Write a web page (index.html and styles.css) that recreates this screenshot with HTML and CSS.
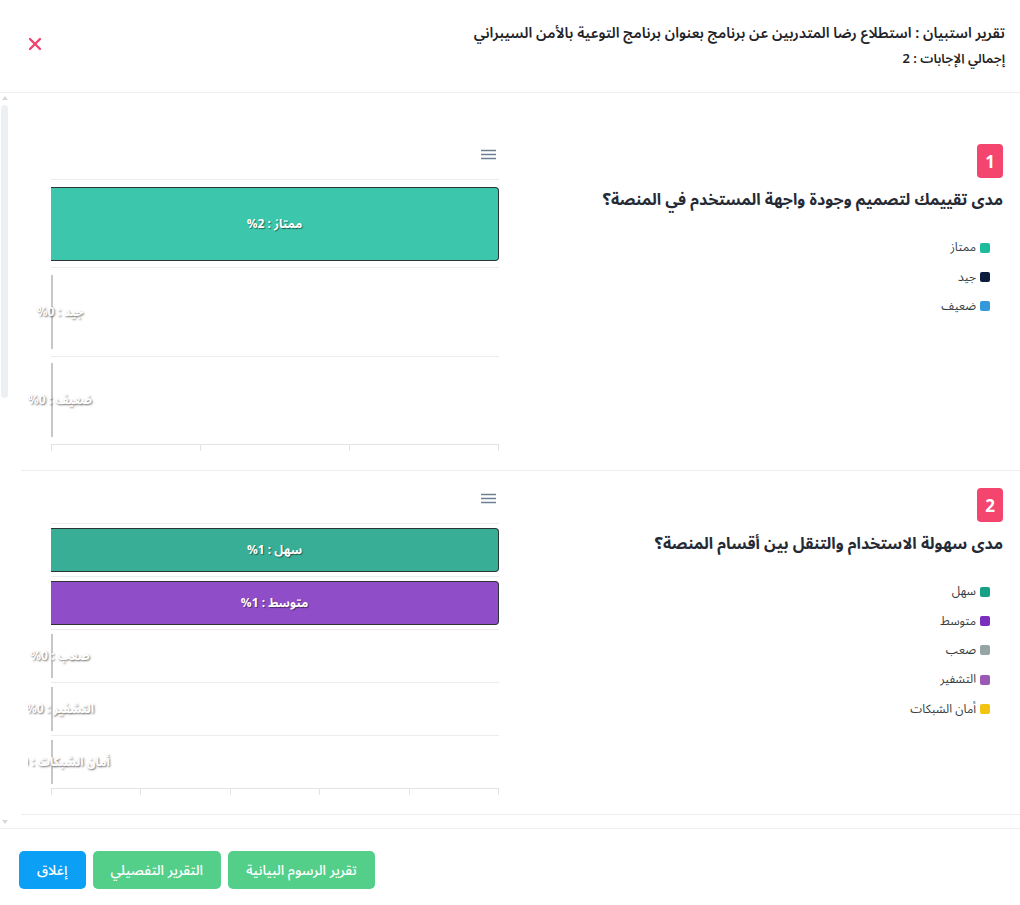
FILE: index.html
```html
<!DOCTYPE html>
<html lang="ar" dir="rtl">
<head>
    <meta charset="UTF-8">
    <meta name="viewport" content="width=device-width, initial-scale=1.0">
    <title>تقرير استبيان</title>
    <link rel="stylesheet" href="styles.css">
</head>
<body>
    <div class="report-modal">
        <div class="report-header">
            <div class="report-heading">
                <h2 class="report-title">تقرير استبيان : استطلاع رضا المتدربين عن برنامج بعنوان برنامج التوعية بالأمن السيبراني</h2>
                <p class="report-total">إجمالي الإجابات : 2</p>
            </div>
            <button class="close-btn" aria-label="إغلاق">
                <svg width="14" height="14" viewBox="0 0 14 14"><path d="M2 2L12 12M12 2L2 12" stroke="currentColor" stroke-width="2.4" stroke-linecap="round"/></svg>
            </button>
        </div>

        <div class="report-main">
            <div class="report-body">
                <!-- question 1 -->
                <section class="question">
                    <div class="question-info">
                        <span class="question-num">1</span>
                        <h3 class="question-title">مدى تقييمك لتصميم وجودة واجهة المستخدم في المنصة؟</h3>
                        <ul class="legend">
                            <li><i class="swatch c-turquoise"></i>ممتاز</li>
                            <li><i class="swatch c-navy"></i>جيد</li>
                            <li><i class="swatch c-blue"></i>ضعيف</li>
                        </ul>
                    </div>
                    <div class="chart">
                        <div class="chart-toolbar">
                            <svg class="menu-icon" width="15" height="11" viewBox="0 0 15 11"><path d="M0 1.5H15M0 5.5H15M0 9.5H15" stroke="#6e8192" stroke-width="1.4"/></svg>
                        </div>
                        <div class="plot">
                            <div class="plot-row"><div class="bar c-turquoise" style="width:100%"><span class="bar-label">ممتاز : <bdi dir="ltr">%2</bdi></span></div></div>
                            <div class="plot-row"><div class="bar zero"><span class="bar-label">جيد : <bdi dir="ltr">%0</bdi></span></div></div>
                            <div class="plot-row"><div class="bar zero"><span class="bar-label">ضعيف : <bdi dir="ltr">%0</bdi></span></div></div>
                        </div>
                        <div class="x-axis"><i></i><i></i><i></i><i></i></div>
                    </div>
                </section>

                <!-- question 2 -->
                <section class="question">
                    <div class="question-info">
                        <span class="question-num">2</span>
                        <h3 class="question-title">مدى سهولة الاستخدام والتنقل بين أقسام المنصة؟</h3>
                        <ul class="legend">
                            <li><i class="swatch c-green"></i>سهل</li>
                            <li><i class="swatch c-purple"></i>متوسط</li>
                            <li><i class="swatch c-gray"></i>صعب</li>
                            <li><i class="swatch c-amethyst"></i>التشفير</li>
                            <li><i class="swatch c-yellow"></i>أمان الشبكات</li>
                        </ul>
                    </div>
                    <div class="chart">
                        <div class="chart-toolbar">
                            <svg class="menu-icon" width="15" height="11" viewBox="0 0 15 11"><path d="M0 1.5H15M0 5.5H15M0 9.5H15" stroke="#6e8192" stroke-width="1.4"/></svg>
                        </div>
                        <div class="plot">
                            <div class="plot-row"><div class="bar c-green" style="width:100%"><span class="bar-label">سهل : <bdi dir="ltr">%1</bdi></span></div></div>
                            <div class="plot-row"><div class="bar c-purple" style="width:100%"><span class="bar-label">متوسط : <bdi dir="ltr">%1</bdi></span></div></div>
                            <div class="plot-row"><div class="bar zero"><span class="bar-label">صعب : <bdi dir="ltr">%0</bdi></span></div></div>
                            <div class="plot-row"><div class="bar zero"><span class="bar-label">التشفير : <bdi dir="ltr">%0</bdi></span></div></div>
                            <div class="plot-row"><div class="bar zero"><span class="bar-label">أمان الشبكات : <bdi dir="ltr">%0</bdi></span></div></div>
                        </div>
                        <div class="x-axis"><i></i><i></i><i></i><i></i><i></i><i></i></div>
                    </div>
                </section>

                <!-- question 3 -->
                <section class="question">
                    <div class="question-info">
                        <span class="question-num">3</span>
                        <h3 class="question-title">مدى وضوح المحتوى التدريبي المقدم في البرنامج؟</h3>
                        <ul class="legend">
                            <li><i class="swatch c-turquoise"></i>واضح</li>
                            <li><i class="swatch c-navy"></i>مقبول</li>
                            <li><i class="swatch c-blue"></i>غير واضح</li>
                        </ul>
                    </div>
                    <div class="chart">
                        <div class="chart-toolbar">
                            <svg class="menu-icon" width="15" height="11" viewBox="0 0 15 11"><path d="M0 1.5H15M0 5.5H15M0 9.5H15" stroke="#6e8192" stroke-width="1.4"/></svg>
                        </div>
                        <div class="plot">
                            <div class="plot-row"><div class="bar c-turquoise" style="width:100%"><span class="bar-label">واضح : <bdi dir="ltr">%2</bdi></span></div></div>
                            <div class="plot-row"><div class="bar zero"><span class="bar-label">مقبول : <bdi dir="ltr">%0</bdi></span></div></div>
                            <div class="plot-row"><div class="bar zero"><span class="bar-label">غير واضح : <bdi dir="ltr">%0</bdi></span></div></div>
                        </div>
                        <div class="x-axis"><i></i><i></i><i></i><i></i></div>
                    </div>
                </section>
            </div>

            <div class="scroll-rail" aria-hidden="true">
                <span class="rail-arrow up"></span>
                <span class="rail-thumb"></span>
                <span class="rail-arrow down"></span>
            </div>
        </div>

        <div class="report-footer">
            <button class="btn btn-green">تقرير الرسوم البيانية</button>
            <button class="btn btn-green">التقرير التفصيلي</button>
            <button class="btn btn-blue">إغلاق</button>
        </div>
    </div>
</body>
</html>
```

FILE: styles.css
```css
* {
    box-sizing: border-box;
}
html, body {
    margin: 0;
    height: 100%;
}
body {
    font-family: "Noto Sans Arabic", "Noto Sans Arabic UI", "Noto Kufi Arabic", "Noto Sans", sans-serif;
    color: #212529;
    background: #fff;
}
.report-modal {
    display: flex;
    flex-direction: column;
    height: 100vh;
}

/* header */
.report-header {
    display: flex;
    align-items: center;
    justify-content: space-between;
    height: 93px;
    padding: 0 15px 0 28px;
    border-bottom: 1px solid #eceef1;
    flex-shrink: 0;
}
.report-title {
    margin: 0;
    font-size: 14.6px;
    font-weight: 600;
    line-height: 26px;
    color: #1f2328;
}
.report-total {
    margin: 0;
    font-size: 13px;
    font-weight: 600;
    line-height: 24px;
    color: #1f2328;
}
.close-btn {
    display: flex;
    padding: 0;
    border: none;
    background: none;
    color: #f0446d;
    cursor: pointer;
    margin-top: -4px;
}

.report-main {
    flex: 1;
    display: flex;
    min-height: 0;
}
.report-body {
    flex: 1;
    overflow: hidden;
    padding-top: 34px;
}
.scroll-rail {
    display: flex;
    flex-direction: column;
    align-items: center;
    width: 9px;
    padding: 3px 0 4px;
}
.rail-arrow {
    width: 0;
    height: 0;
    border-left: 3px solid transparent;
    border-right: 3px solid transparent;
}
.rail-arrow.up {
    border-bottom: 4px solid #d6d9dc;
}
.rail-arrow.down {
    margin-top: auto;
    border-top: 4px solid #d6d9dc;
}
.rail-thumb {
    width: 7px;
    height: 293px;
    margin-top: 5px;
    border-radius: 4px;
    background: #edf0f3;
}

.question {
    display: flex;
    height: 344px;
    margin-left: 12px;
    border-bottom: 1px solid #eceef1;
}
.question-info {
    flex: 1;
    padding-right: 17px;
}
.question-num {
    display: flex;
    align-items: center;
    justify-content: center;
    width: 26px;
    height: 34px;
    margin-top: 17px;
    border-radius: 4px;
    background: #f4456f;
    color: #fff;
    font-family: "Noto Sans", sans-serif;
    font-size: 17px;
    font-weight: 700;
}
.question-title {
    margin: 9px 0 0;
    font-size: 16px;
    font-weight: 700;
    line-height: 26px;
    color: #252a34;
}
.legend {
    list-style: none;
    margin: 20px 0 0;
    padding: 0 13px 0 0;
}
.legend li {
    display: flex;
    align-items: center;
    gap: 4px;
    height: 29.4px;
    font-size: 12px;
    color: #373d3f;
}
.swatch {
    width: 10px;
    height: 10px;
    border-radius: 2px;
}

/* colours */
.swatch.c-turquoise { background: #1abc9c; }
.swatch.c-navy { background: #0c1c3c; }
.swatch.c-blue { background: #3498db; }
.swatch.c-green { background: #16a085; }
.swatch.c-purple { background: #7b2fbe; }
.swatch.c-gray { background: #95a5a6; }
.swatch.c-amethyst { background: #9b59b6; }
.swatch.c-yellow { background: #f1c40f; }
.bar.c-turquoise { background: rgba(26, 188, 156, .85); }
.bar.c-green { background: rgba(22, 160, 133, .85); }
.bar.c-purple { background: rgba(123, 47, 190, .85); }

/* chart */
.chart {
    width: 477px;
    margin-left: 7px;
    direction: ltr;
    overflow: hidden;
}
.chart-toolbar {
    display: flex;
    justify-content: flex-end;
    height: 52px;
    padding: 22px 9px 0 0;
}
.plot {
    display: flex;
    flex-direction: column;
    height: 266px;
    margin: 0 6px 0 23px;
    border-bottom: 1px solid #e3e3e3;
}
.plot-row {
    flex: 1;
    display: flex;
    align-items: center;
    border-top: 1px solid #ececec;
}
.bar {
    position: relative;
    height: 85%;
    border: 1px solid #2e3436;
    border-left: none;
    border-radius: 0 4px 4px 0;
}
.bar.zero {
    width: 0;
    border: none;
    border-left: 2px solid #c6c6c6;
    border-radius: 0;
}
.bar-label {
    position: absolute;
    top: 50%;
    left: 50%;
    transform: translate(-50%, -50%);
    direction: rtl;
    white-space: nowrap;
    font-size: 12px;
    font-weight: 700;
    color: #fff;
    text-shadow: 1px 1px 1px rgba(0, 0, 0, .45);
}
.bar.zero .bar-label {
    left: 7px;
    text-shadow: 1px 1px 2px rgba(0, 0, 0, .55);
}
.x-axis {
    display: flex;
    justify-content: space-between;
    height: 6px;
    margin: 0 6px 0 23px;
}
.x-axis i {
    width: 1px;
    background: #e3e3e3;
}

/* footer */
.report-footer {
    display: flex;
    justify-content: flex-end;
    gap: 7px;
    height: 77px;
    padding: 22px 19px 0;
    border-top: 1px solid #eceef1;
    flex-shrink: 0;
}
.btn {
    height: 38px;
    padding: 0 18px;
    border: none;
    border-radius: 5px;
    color: #fff;
    font-family: inherit;
    font-size: 14px;
    font-weight: 500;
    cursor: pointer;
}
.btn-green {
    background: #53cf8a;
}
.btn-blue {
    background: #0ba0f6;
}
```
